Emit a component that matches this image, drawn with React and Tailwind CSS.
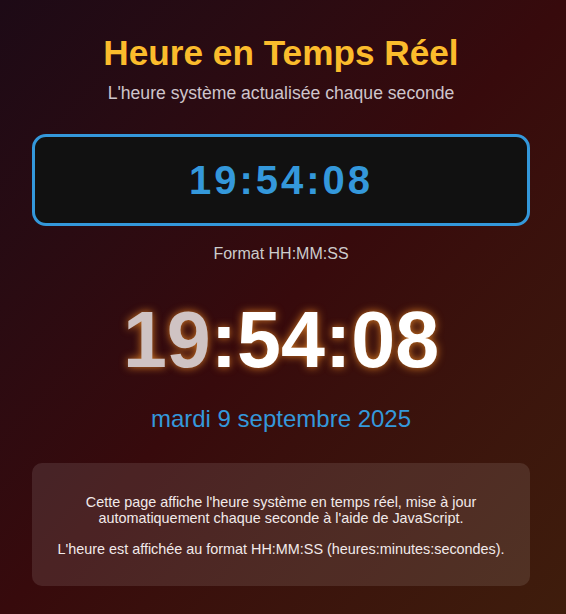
import React, { useState, useEffect } from 'react';

// Clock page: small boxed time, big glowing time, date and an info card
const App = () => {
  const [now] = useState(new Date(2025, 8, 9, 19, 54, 8));
  const [tick, setTick] = useState(0);

  useEffect(() => {
    const id = setInterval(() => setTick((t) => t + 1), 1000);
    return () => clearInterval(id);
  }, []);

  const pad = (n) => String(n).padStart(2, '0');
  const hh = pad(now.getHours());
  const mm = pad(now.getMinutes());
  const ss = pad(now.getSeconds());
  const time = `${hh}:${mm}:${ss}`;

  return (
    <div
      className="min-h-[614px] w-full bg-gradient-to-br from-[#1d0a16] via-[#370a0c] to-[#3f1d0c] pr-[4px] text-white"
      style={{ fontFamily: '"Liberation Sans", Arial, sans-serif' }}
      data-tick={tick}
    >
      <div className="mx-auto flex w-[498px] flex-col items-center pt-[33px] pb-[29px]">
        <h1 className="text-[35.2px] font-bold leading-[40px] text-[#fbbc2c]">Heure en Temps Réel</h1>
        <p className="mt-[9px] text-[17.6px] leading-[22px] text-[#cfc5cb]">
          L'heure système actualisée chaque seconde
        </p>

        <div className="mt-[30px] flex h-[92px] w-full items-center justify-center rounded-[14px] border-[3px] border-[#3498db] bg-[#111111]">
          <span className="text-[40px] font-bold tracking-[3px] text-[#3498db]">{time}</span>
        </div>

        <p className="mt-[18px] text-[16px] leading-[20px] text-[#cccccc]">Format HH:MM:SS</p>

        <div
          className="mt-[28px] text-[79px] font-bold leading-[96px]"
          style={{ textShadow: '0 0 9px rgba(255,150,40,0.8)' }}
        >
          <span className="text-[#cfc3c3]">{hh}</span>
          <span className="text-white">:{mm}:{ss}</span>
        </div>

        <p className="mt-[16px] text-[24px] leading-[30px] text-[#3498db]">mardi 9 septembre 2025</p>

        <div className="mt-[29px] w-full rounded-[10px] bg-white/10 px-[20px] pt-[31px] pb-[29px] text-center text-[14.4px] leading-[16px] text-[#f2eaea]">
          <p>
            Cette page affiche l'heure système en temps réel, mise à jour
            <br />
            automatiquement chaque seconde à l'aide de JavaScript.
          </p>
          <p className="mt-[15px]">L'heure est affichée au format HH:MM:SS (heures:minutes:secondes).</p>
        </div>
      </div>
    </div>
  );
};

export default App;
